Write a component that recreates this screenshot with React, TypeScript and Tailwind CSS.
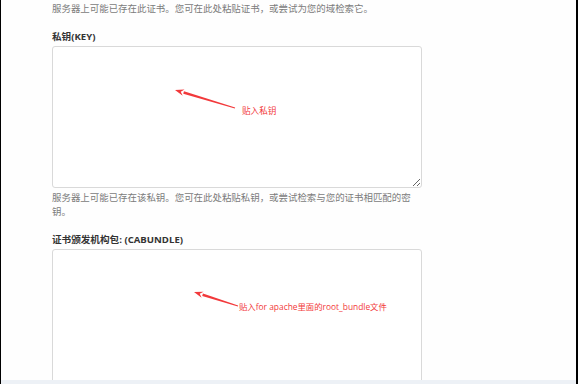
import React from "react";

const font = { fontFamily: '"Open Sans", "Noto Sans CJK SC", sans-serif' };

function Arrow({ x1, y1, x2, y2 }: { x1: number; y1: number; x2: number; y2: number }) {
  // tail (x1,y1) -> tip (x2,y2), line gets thicker towards the head
  const dx = x2 - x1;
  const dy = y2 - y1;
  const len = Math.hypot(dx, dy);
  const ux = dx / len;
  const uy = dy / len;
  const nx = -uy;
  const ny = ux;
  const head = 9;
  const bx = x2 - ux * head;
  const by = y2 - uy * head;
  const body = [
    [x1 + nx * 0.4, y1 + ny * 0.4],
    [bx + nx * 1.3, by + ny * 1.3],
    [bx - nx * 1.3, by - ny * 1.3],
    [x1 - nx * 0.4, y1 - ny * 0.4],
  ];
  const tip = [
    [x2, y2],
    [bx + nx * 3.2, by + ny * 3.2],
    [x2 - ux * 6, y2 - uy * 6],
    [bx - nx * 3.2, by - ny * 3.2],
  ];
  const pts = (p: number[][]) => p.map((q) => q.join(",")).join(" ");
  return (
    <>
      <polygon points={pts(body)} fill="#f2393b" />
      <polygon points={pts(tip)} fill="#f2393b" />
    </>
  );
}

export default function App() {
  return (
    <div
      className="relative w-[578px] h-[384px] overflow-hidden bg-[#fefefe] border-l border-l-black border-r-2 border-r-black flex flex-col [text-spacing-trim:space-all]"
      style={font}
    >
      <div className="flex-1 overflow-hidden pl-[51px]">
        {/* Certificate help */}
        <p className="mt-[2px] text-[9.45px] leading-[13.5px] text-[#7b7b7b]">
          服务器上可能已存在此证书。您可在此处粘贴证书，或尝试为您的域检索它。
        </p>

        {/* Private key */}
        <label className="block mt-[14.5px] text-[9.6px] leading-[14px] font-bold text-[#333]">
          私钥(KEY)
        </label>
        <textarea
          readOnly
          className="block mt-[2px] w-[370px] h-[142px] bg-white border border-[#d9d9d9] rounded-[3px] outline-none"
        />
        <p className="mt-[3px] w-[370px] text-[9.45px] leading-[13.5px] text-[#7b7b7b]">
          服务器上可能已存在该私钥。您可在此处粘贴私钥，或尝试检索与您的证书相匹配的密钥。
        </p>

        {/* CA bundle */}
        <label className="block mt-[15px] text-[9.6px] leading-[14px] font-bold text-[#333]">
          证书颁发机构包: (CABUNDLE)
        </label>
        <textarea
          readOnly
          className="block mt-[2px] w-[370px] h-[160px] bg-white border border-[#d9d9d9] rounded-[3px] outline-none resize-none"
        />
      </div>
      <div className="h-[4px] bg-[#edf1f6]" />

      {/* Annotations */}
      <svg className="absolute left-0 top-0 pointer-events-none" width="578" height="384">
        <Arrow x1={234} y1={108} x2={174} y2={90} />
        <Arrow x1={237} y1={306} x2={193} y2={292} />
      </svg>
      <span className="absolute left-[241px] top-[105px] text-[8.6px] leading-[12px] text-[#f2393b]">
        贴入私钥
      </span>
      <span className="absolute left-[238px] top-[301px] text-[8.4px] leading-[12px] text-[#f2393b]">
        贴入for apache里面的root_bundle文件
      </span>
    </div>
  );
}
